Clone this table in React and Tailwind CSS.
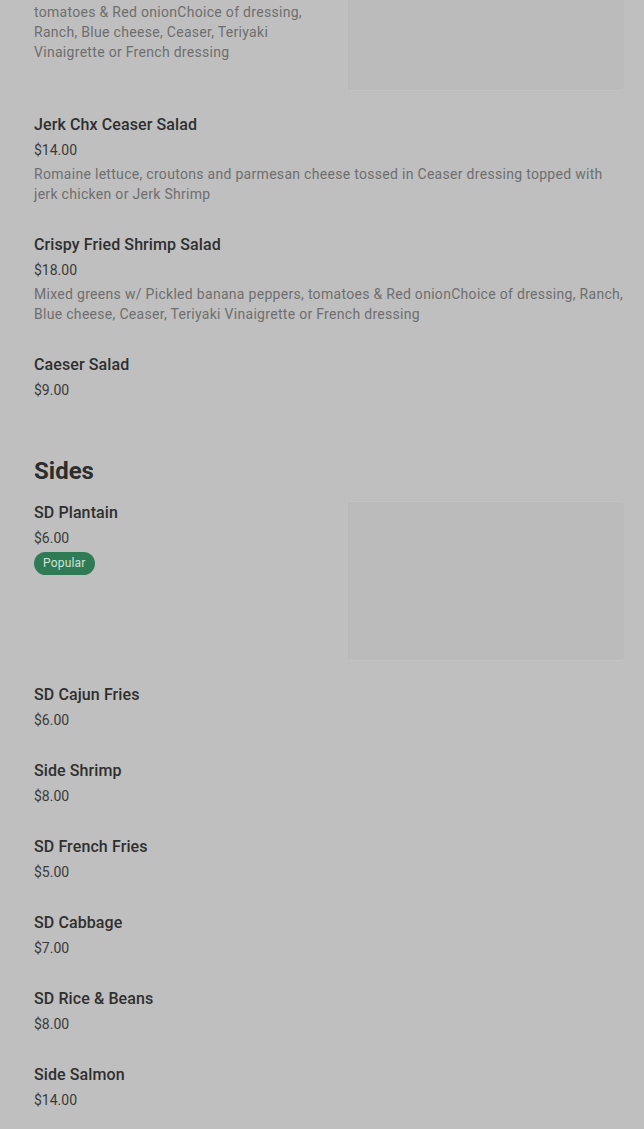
import React from 'react';

const salads = [
  {
    name: 'Garden Salad',
    price: '$12.00',
    desc: 'Mixed greens w/ Pickled banana peppers, tomatoes & Red onionChoice of dressing, Ranch, Blue cheese, Ceaser, Teriyaki Vinaigrette or French dressing',
    image: true,
  },
  {
    name: 'Jerk Chx Ceaser Salad',
    price: '$14.00',
    desc: 'Romaine lettuce, croutons and parmesan cheese tossed in Ceaser dressing topped with jerk chicken or Jerk Shrimp',
  },
  {
    name: 'Crispy Fried Shrimp Salad',
    price: '$18.00',
    desc: 'Mixed greens w/ Pickled banana peppers, tomatoes & Red onionChoice of dressing, Ranch, Blue cheese, Ceaser, Teriyaki Vinaigrette or French dressing',
  },
  { name: 'Caeser Salad', price: '$9.00' },
];

const sides = [
  { name: 'SD Plantain', price: '$6.00', popular: true, image: true },
  { name: 'SD Cajun Fries', price: '$6.00' },
  { name: 'Side Shrimp', price: '$8.00' },
  { name: 'SD French Fries', price: '$5.00' },
  { name: 'SD Cabbage', price: '$7.00' },
  { name: 'SD Rice & Beans', price: '$8.00' },
  { name: 'Side Salmon', price: '$14.00' },
];

function MenuItem({ item }) {
  return (
    <div className={`flex gap-4 ${item.image ? 'pb-[22px]' : 'pb-[29px]'}`}>
      <div className="flex-1 min-w-0">
        <p className="text-[16px] leading-6 font-medium tracking-[0.1px] text-[#2f2f2f]">{item.name}</p>
        <p className="text-[14px] leading-5 mt-[3px] text-[#3a3a3a]">{item.price}</p>
        {item.desc && (
          <p className="text-[14px] leading-5 mt-1 tracking-[0.3px] text-[#6e6e6e]">{item.desc}</p>
        )}
        {item.popular && (
          <span className="inline-block mt-[4px] px-[9px] h-[23px] leading-[23px] rounded-full bg-[#2f7b55] text-[12px] tracking-[0.2px] text-[#cfe3d7]">
            Popular
          </span>
        )}
      </div>
      {item.image && (
        <div className="w-[276px] h-[160px] shrink-0 rounded-sm bg-[#bbbbbb] border-y border-[#c3c3c3] border-l border-l-[#b8b8b8]" />
      )}
    </div>
  );
}

export default function App() {
  return (
    <div
      className="min-h-screen bg-[#bfbfbf] overflow-hidden"
      style={{ fontFamily: 'Roboto, "Liberation Sans", sans-serif' }}
    >
      <div className="pl-[34px] pr-[20px] mt-[-69px]">
        {/* Salads (scrolled) */}
        <div>
          {salads.map((item) => (
            <MenuItem key={item.name} item={item} />
          ))}
        </div>

        {/* Sides */}
        <div className="mt-[26px]">
          <h2 className="text-[24px] leading-8 font-bold text-[#2d2d2d] mb-[14px]">Sides</h2>
          {sides.map((item) => (
            <MenuItem key={item.name} item={item} />
          ))}
        </div>
      </div>
    </div>
  );
}
